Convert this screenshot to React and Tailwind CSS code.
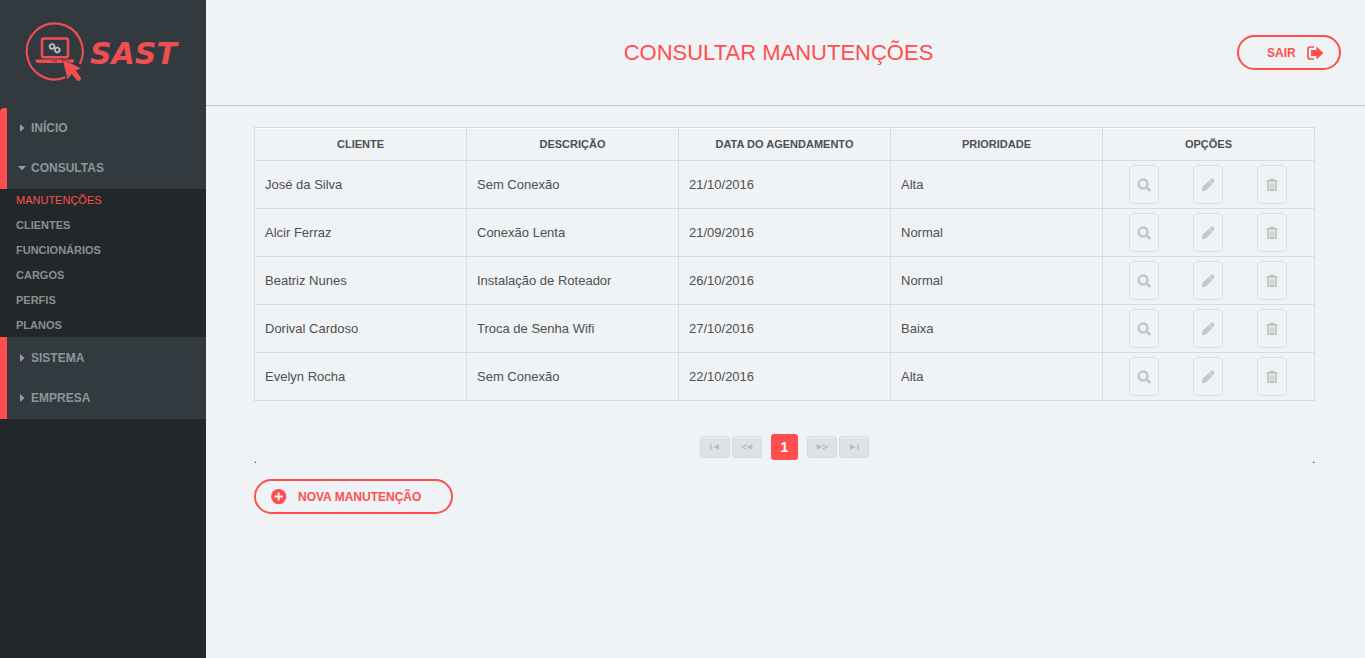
import React from "react";

const rows = [
  ["José da Silva", "Sem Conexão", "21/10/2016", "Alta"],
  ["Alcir Ferraz", "Conexão Lenta", "21/09/2016", "Normal"],
  ["Beatriz Nunes", "Instalação de Roteador", "26/10/2016", "Normal"],
  ["Dorival Cardoso", "Troca de Senha Wifi", "27/10/2016", "Baixa"],
  ["Evelyn Rocha", "Sem Conexão", "22/10/2016", "Alta"],
];

const headers = ["CLIENTE", "DESCRIÇÃO", "DATA DO AGENDAMENTO", "PRIORIDADE", "OPÇÕES"];

const consultas = ["MANUTENÇÕES", "CLIENTES", "FUNCIONÁRIOS", "CARGOS", "PERFIS", "PLANOS"];

function LogoMark() {
  return (
    <svg width="60" height="60" viewBox="0 0 60 60" className="shrink-0" aria-hidden="true" fill="none">
      <path d="M40.5 55.3A28 28 0 1 1 54.8 42" stroke="#f04e53" strokeWidth="2.1" />
      <rect x="17" y="16.5" width="26" height="18.8" rx="2" stroke="#f04e53" strokeWidth="2.6" />
      <path d="M10.5 37.6H49V38.8Q49 41 46.5 41H13Q10.5 41 10.5 38.8Z" fill="#f04e53" />
      <path d="M27.5 39.2H32" stroke="#323a3f" strokeWidth="0.9" />
      <circle cx="27" cy="24.5" r="2.2" stroke="#c2c7ca" strokeWidth="1.5" />
      <circle cx="27" cy="24.5" r="3.2" stroke="#c2c7ca" strokeWidth="0.8" strokeDasharray="1.2 1.3" />
      <circle cx="32.3" cy="28" r="2.2" stroke="#c2c7ca" strokeWidth="1.5" />
      <circle cx="32.3" cy="28" r="3.2" stroke="#c2c7ca" strokeWidth="0.8" strokeDasharray="1.2 1.3" />
      <path
        d="M37.6 37.6L56 46.2L50.8 48.6L56.2 56Q55.8 59.2 52.4 59L46.8 52L42.6 57.2Z"
        stroke="#323a3f"
        strokeWidth="1.6"
      />
      <path
        d="M37.6 37.6L56 46.2L50.8 48.6L56.2 56Q55.8 59.2 52.4 59L46.8 52L42.6 57.2Z"
        fill="#f04e53"
      />
    </svg>
  );
}

function Caret({ open }) {
  return (
    <svg width="8" height="8" viewBox="0 0 8 8" aria-hidden="true" fill="#9d9a9c">
      {open ? <path d="M0 2H8L4 6.2Z" /> : <path d="M2 0V8L6.4 4Z" />}
    </svg>
  );
}

function MenuItem({ label, open }) {
  return (
    <button
      type="button"
      aria-expanded={open ? "true" : "false"}
      className="flex h-10 w-full items-center gap-[5px] pl-[11px] text-left text-[12px] font-bold text-[#8a979b]"
    >
      <Caret open={open} />
      {label}
    </button>
  );
}

function SearchIcon() {
  return (
    <svg width="14" height="14" viewBox="0 0 14 14" aria-hidden="true" fill="none" stroke="#c5c5c5">
      <circle cx="6" cy="6" r="4.4" strokeWidth="2.5" />
      <path d="M9.2 9.2L12.4 12" strokeWidth="2.8" strokeLinecap="round" />
    </svg>
  );
}

function PencilIcon() {
  return (
    <svg width="14" height="14" viewBox="0 0 14 14" aria-hidden="true" fill="#c5c5c5">
      <path d="M1 13L1.2 9.2L7.9 2.7L11.2 6L4.7 12.7Z" />
      <path d="M8.5 2.2L10 0.9Q11 0.2 12 1.1L12.8 1.9Q13.7 2.9 12.9 4L11.7 5.5Z" />
    </svg>
  );
}

function TrashIcon() {
  return (
    <svg width="14" height="14" viewBox="0 0 14 14" aria-hidden="true" fill="none" stroke="#c5c5c5">
      <path d="M5 2.5V1.3H9V2.5" strokeWidth="1.4" />
      <path d="M1.5 3H12.5" strokeWidth="2" />
      <path d="M3 4V12.2H11V4" strokeWidth="1.8" />
      <path d="M5.3 5V11M7 5V11M8.7 5V11" strokeWidth="1" />
      <path d="M3 11.5H11" strokeWidth="1.2" />
    </svg>
  );
}

function ExitIcon() {
  return (
    <svg width="17" height="14" viewBox="0 0 17 14" aria-hidden="true">
      <path d="M7 1H3Q1 1 1 3V11Q1 13 3 13H7" fill="none" stroke="#ff4e4e" strokeWidth="1.7" />
      <path d="M4 4H9.4V0.4L16.5 7L9.4 13.6V10H4Z" fill="#ff4e4e" />
    </svg>
  );
}

function PlusIcon() {
  return (
    <svg width="16" height="16" viewBox="0 0 16 16" aria-hidden="true">
      <circle cx="7.7" cy="7.6" r="7.6" fill="#ff4e4e" />
      <path d="M7.7 3.6V11.6M3.7 7.6H11.7" stroke="#eff3f6" strokeWidth="2" />
    </svg>
  );
}

const pagerShapes = {
  first: <path d="M1 1.5H2.6V6.5H1ZM10 1.2V6.8L4.2 4Z" />,
  prev: (
    <>
      <path d="M5.6 1.8L1 4L5.6 6.2" fill="none" stroke="#b0bec7" strokeWidth="1.2" />
      <path d="M11.4 1.2V6.8L5.4 4Z" />
    </>
  ),
  next: (
    <>
      <path d="M0.6 1.2V6.8L6.6 4Z" />
      <path d="M6.4 1.8L11 4L6.4 6.2" fill="none" stroke="#b0bec7" strokeWidth="1.2" />
    </>
  ),
  last: <path d="M2 1.2V6.8L7.8 4ZM9.4 1.5H11V6.5H9.4Z" />,
};

function PagerButton({ kind, label }) {
  return (
    <button
      type="button"
      aria-label={label}
      className="flex h-[22px] w-[30px] items-center justify-center rounded-[3px] border border-[#d5dade] bg-[#dee2e5] shadow-[inset_0_1px_0_#eff2f4]"
    >
      <svg width="12" height="8" viewBox="0 0 12 8" aria-hidden="true" fill="#b0bec7">
        {pagerShapes[kind]}
      </svg>
    </button>
  );
}

function OptionButton({ label, children }) {
  return (
    <button
      type="button"
      aria-label={label}
      className="flex h-[39px] w-[30px] items-center justify-center rounded-[5px] border border-[#d9dcde]"
    >
      {children}
    </button>
  );
}

export default function App() {
  return (
    <div className="flex min-h-screen bg-[#eff3f6] font-['Liberation_Sans',Arial,sans-serif] text-[#4f4f4f]">
      <aside className="w-[206px] shrink-0 bg-[#22282a]">
        <a href="#inicio" className="flex h-[108px] items-center bg-[#323a3f] pb-1 pl-[25px]">
          <LogoMark />
          <span className="pt-1 pl-[5px] font-['DejaVu_Sans',sans-serif] text-[30px] leading-none font-bold text-[#f04e53] italic">
            SAST
          </span>
        </a>
        <nav>
          <div className="rounded-tl-sm border-l-[7px] border-[#ff4e4e] bg-[#323a3f] pb-px">
            <MenuItem label="INÍCIO" />
            <MenuItem label="CONSULTAS" open />
          </div>
          <ul className="flex flex-col gap-[2px] pl-4 text-[11px] font-bold text-[#8b8f90]">
            {consultas.map((item, i) => (
              <li key={item}>
                <a
                  href={"#" + item.toLowerCase()}
                  className={i === 0 ? "block leading-[23px] font-normal text-[#ff4e4e]" : "block leading-[23px]"}
                >
                  {item}
                </a>
              </li>
            ))}
          </ul>
          <div className="border-l-[7px] border-[#ff4e4e] bg-[#323a3f] py-px">
            <MenuItem label="SISTEMA" />
            <MenuItem label="EMPRESA" />
          </div>
        </nav>
      </aside>

      <div className="min-w-0 flex-1">
        <header className="grid h-[106px] grid-cols-[1fr_auto_1fr] items-center border-b border-[#bcc6ce] pr-6 pl-[10px]">
          <h1 className="col-start-2 text-[22px] text-[#ff4e4e]">CONSULTAR MANUTENÇÕES</h1>
          <button
            type="button"
            className="flex h-[35px] w-[104px] items-center gap-[11px] justify-self-end rounded-full border-2 border-[#ff4e4e] pl-7 text-[12px] font-bold text-[#ff4e4e]"
          >
            SAIR
            <ExitIcon />
          </button>
        </header>

        <main className="pt-[21px] pr-[50px] pl-12">
          <table className="w-full table-fixed border-collapse">
            <thead>
              <tr className="h-[33px]">
                {headers.map((h) => (
                  <th
                    key={h}
                    scope="col"
                    className="border border-[#d9dcde] p-0 text-[11px] font-bold shadow-[inset_0_1px_0_#ffffff]"
                  >
                    {h}
                  </th>
                ))}
              </tr>
            </thead>
            <tbody>
              {rows.map((row) => (
                <tr key={row[0]} className="h-12">
                  {row.map((cell, i) => (
                    <td key={i} className="border border-[#d9dcde] px-[10px] py-0 text-[13px]">
                      {cell}
                    </td>
                  ))}
                  <td className="border border-[#d9dcde] p-0">
                    <div className="flex justify-center gap-[34px] pr-[2px]">
                      <OptionButton label={"Visualizar " + row[0]}>
                        <SearchIcon />
                      </OptionButton>
                      <OptionButton label={"Editar " + row[0]}>
                        <PencilIcon />
                      </OptionButton>
                      <OptionButton label={"Excluir " + row[0]}>
                        <TrashIcon />
                      </OptionButton>
                    </div>
                  </td>
                </tr>
              ))}
            </tbody>
          </table>

          <div className="mt-[33px] flex h-[31px] items-start justify-between text-[10px] leading-none text-black">
            <span className="self-end">.</span>
            <div className="flex items-center gap-[9px]">
              <div className="flex gap-[2px]">
                <PagerButton kind="first" label="Primeira página" />
                <PagerButton kind="prev" label="Página anterior" />
              </div>
              <button
                type="button"
                aria-current="page"
                className="h-[26px] w-[27px] rounded-[3px] bg-[#ff4e4e] text-[14px] font-bold text-white"
              >
                1
              </button>
              <div className="flex gap-[2px]">
                <PagerButton kind="next" label="Próxima página" />
                <PagerButton kind="last" label="Última página" />
              </div>
            </div>
            <span className="self-end">.</span>
          </div>

          <button
            type="button"
            className="mt-[14px] flex h-[35px] w-[199px] items-center gap-[11px] rounded-full border-2 border-[#ff4e4e] pl-[15px] text-[12px] font-bold text-[#ff4e4e]"
          >
            <PlusIcon />
            NOVA MANUTENÇÃO
          </button>
        </main>
      </div>
    </div>
  );
}
